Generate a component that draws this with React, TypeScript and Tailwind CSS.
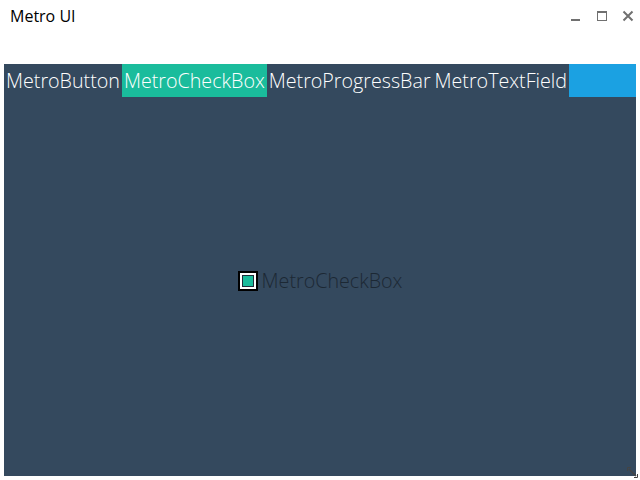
const tabs = ["MetroButton", "MetroCheckBox", "MetroProgressBar", "MetroTextField"];

export default function App() {
  const selected = "MetroCheckBox";

  return (
    <div className="relative h-[480px] w-[640px] overflow-hidden bg-white" style={{ fontFamily: '"Open Sans", sans-serif' }}>
      <div className="flex h-[32px] items-center justify-between pl-[10px] pr-[5px]">
        <span className="text-[16px] text-black">Metro UI</span>
        <div className="flex items-center gap-[12px]">
          <svg width="14" height="14" viewBox="0 0 14 14">
            <rect x="2" y="10" width="9" height="2" fill="#707070" />
          </svg>
          <svg width="14" height="14" viewBox="0 0 14 14">
            <rect x="2.5" y="2.5" width="9" height="9" fill="none" stroke="#707070" />
            <rect x="2" y="2" width="10" height="2" fill="#707070" />
          </svg>
          <svg width="14" height="14" viewBox="0 0 14 14">
            <path d="M2.5 2.5 L11.5 11.5 M11.5 2.5 L2.5 11.5" stroke="#707070" strokeWidth="2" />
          </svg>
        </div>
      </div>

      <div className="ml-[4px] mt-[32px] flex h-[412px] w-[632px] flex-col bg-[#34495e]">
        <div className="flex h-[33px]">
          {tabs.map((tab) => (
            <div
              key={tab}
              className={`flex items-center px-[2px] text-[19.7px] font-light leading-none text-white ${
                tab === selected ? "bg-[#1abc9c]" : ""
              }`}
            >
              {tab}
            </div>
          ))}
          <div className="flex-1 bg-[#1ba1e2]" />
        </div>
        <div className="flex flex-1 items-center justify-center pb-[11px]">
          <div className="flex items-center gap-[4px]">
            <div className="flex h-[20px] w-[20px] items-center justify-center border-2 border-black bg-white">
              <div className="h-[12px] w-[12px] border border-[#1f2d3a] bg-[#1abc9c]" />
            </div>
            <span className="text-[19.7px] font-light leading-none text-[#1c2834]">MetroCheckBox</span>
          </div>
        </div>
      </div>

      <svg className="absolute bottom-[2px] right-[2px]" width="11" height="11" viewBox="0 0 11 11">
        <path d="M0.5 4 V0.5 H4 M10.5 7 V10.5 H7" stroke="#444" strokeWidth="1" fill="none" />
        <path d="M2 2 L9 9" stroke="#444" strokeWidth="1.5" />
      </svg>
    </div>
  );
}
